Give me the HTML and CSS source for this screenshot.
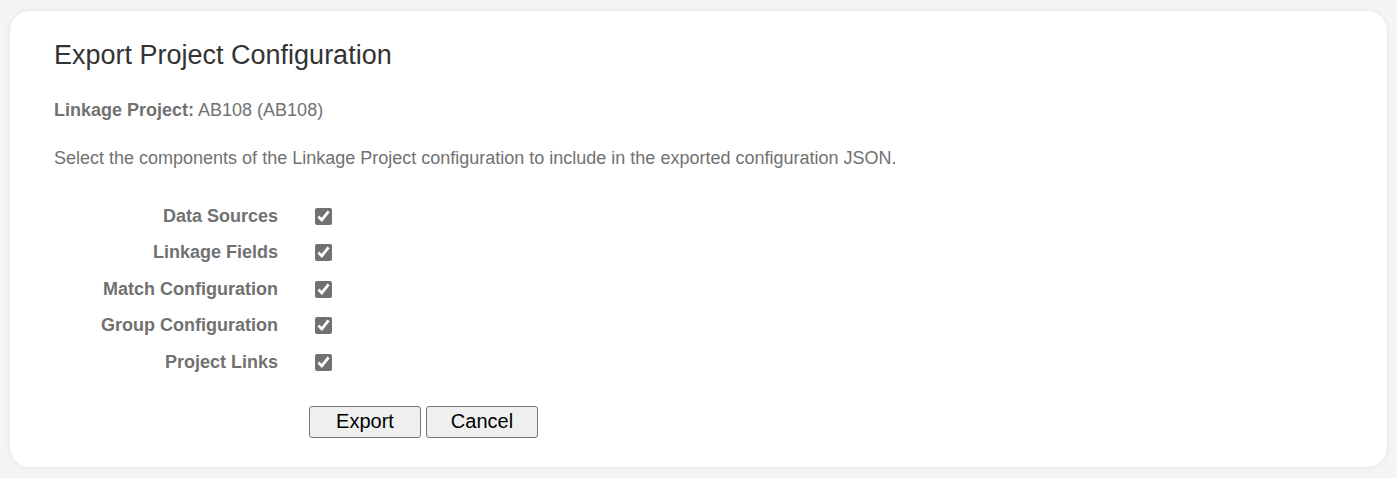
FILE: index.html
```html
<!DOCTYPE html>
<html>
<head>
<meta charset="utf-8">
<link rel="stylesheet" href="styles.css">
</head>
<body>
<div class="card">
  <h1 class="title">Export Project Configuration</h1>
  <p class="project"><b>Linkage Project:</b> AB108 (AB108)</p>
  <p class="desc">Select the components of the Linkage Project configuration to include in the exported configuration JSON.</p>
  <div class="form">
    <label class="lbl" for="c1">Data Sources</label><div class="cell"><input type="checkbox" id="c1" checked></div>
    <label class="lbl" for="c2">Linkage Fields</label><div class="cell"><input type="checkbox" id="c2" checked></div>
    <label class="lbl" for="c3">Match Configuration</label><div class="cell"><input type="checkbox" id="c3" checked></div>
    <label class="lbl" for="c4">Group Configuration</label><div class="cell"><input type="checkbox" id="c4" checked></div>
    <label class="lbl" for="c5">Project Links</label><div class="cell"><input type="checkbox" id="c5" checked></div>
  </div>
  <div class="buttons">
    <button class="btn">Export</button>
    <button class="btn">Cancel</button>
  </div>
</div>
</body>
</html>
```
FILE: styles.css
```css
html, body {
  margin: 0;
  padding: 0;
}
body {
  background: #f5f5f7;
  font-family: "Liberation Sans", Arial, sans-serif;
  color: #717171;
  padding: 11px 10px 10px 10px;
}
.card {
  background: #fff;
  border-radius: 20px;
  box-shadow: 0 0 6px rgba(0, 0, 0, 0.08);
  padding: 28px 43px 29px 44px;
  height: 456px;
  box-sizing: border-box;
}
.title {
  font-size: 27px;
  font-weight: normal;
  color: #333;
  margin: 0 0 28px 0;
  line-height: 32px;
}
.project {
  font-size: 18px;
  margin: 0 0 26px 0;
  line-height: 22px;
}
.project b {
  font-weight: bold;
}
.desc {
  font-size: 18px;
  margin: 0 0 29px 0;
  line-height: 22px;
}
.form {
  display: grid;
  grid-template-columns: 224px auto;
  column-gap: 31px;
  grid-auto-rows: 36.5px;
  align-items: center;
}
.lbl {
  text-align: right;
  font-weight: bold;
  font-size: 18px;
}
.cell {
  display: flex;
  align-items: center;
}
.cell input {
  width: 17px;
  height: 17px;
  margin: 0 0 0 6px;
  accent-color: #717171;
}
.buttons {
  display: flex;
  gap: 5px;
  margin: 25px 0 0 255px;
}
.btn {
  width: 112px;
  height: 32px;
  font-family: "Liberation Sans", Arial, sans-serif;
  font-size: 20px;
  color: #000;
  background: #efefef;
  border: 1px solid #767676;
  border-radius: 3px;
  padding: 0;
}
```
